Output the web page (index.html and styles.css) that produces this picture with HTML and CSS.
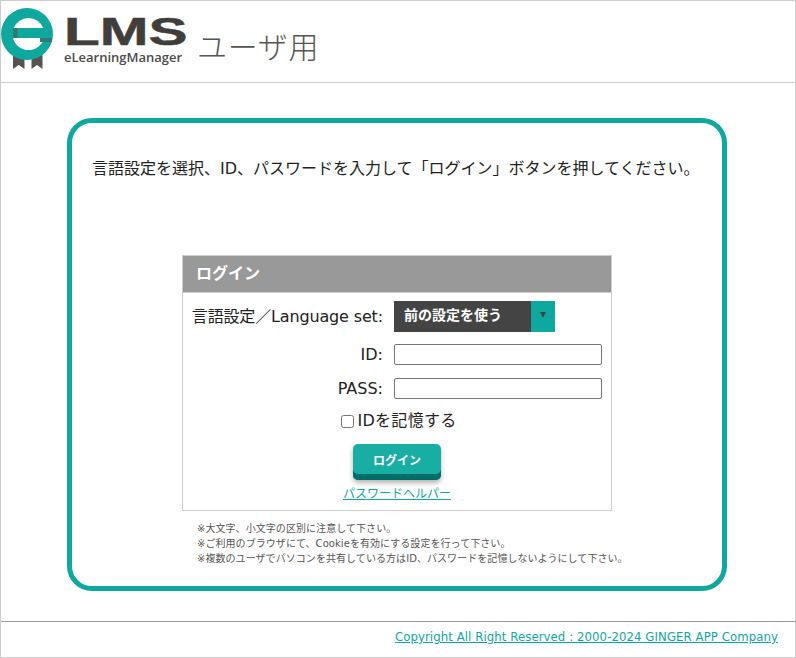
FILE: index.html
```html
<!DOCTYPE html>
<html lang="ja">
<head>
<meta charset="utf-8">
<title>eLMS ユーザ用</title>
<link rel="stylesheet" href="styles.css">
</head>
<body>
<div class="page">
  <header class="header">
    <svg class="logo" width="60" height="72" viewBox="0 0 60 72">
      <path d="M13 54H24.500V69L18.750 65L13 69Z" fill="#58534f"/>
      <path d="M31.500 54H42.500V69L37 65L31.500 69Z" fill="#58534f"/>
      <circle cx="27" cy="34" r="26" fill="#0fa89e"/>
      <path d="M13.700 28A16 16 0 0 1 43.300 28Z" fill="#fff"/>
      <path d="M13 38H44A16 16 0 0 1 13 38Z" fill="#fff"/>
      <rect x="13" y="28" width="4.500" height="10" fill="#2f7a74"/>
      <rect x="40" y="38" width="12" height="4" fill="#2f7a74"/>
    </svg>
    <div class="wordmark">
      <div class="logo-big">LMS</div>
      <div class="logo-small">eLearningManager</div>
    </div>
    <h1 class="title">ユーザ用</h1>
  </header>
  <main class="main">
    <section class="card">
      <p class="lead">言語設定を選択、ID、パスワードを入力して「ログイン」ボタンを押してください。</p>
      <div class="login">
        <h2 class="login-head">ログイン</h2>
        <form class="login-body">
          <div class="row row-lang">
            <span class="label label-lang">言語設定／Language set:</span>
            <div class="select"><span class="select-text">前の設定を使う</span><span class="select-arrow"><i class="tri"></i></span></div>
          </div>
          <div class="row row-id">
            <label class="label" for="uid">ID:</label>
            <input class="field" id="uid" type="text">
          </div>
          <div class="row row-pass">
            <label class="label" for="pw">PASS:</label>
            <input class="field" id="pw" type="password">
          </div>
          <label class="remember"><input class="check" type="checkbox">IDを記憶する</label>
          <button class="btn" type="button">ログイン</button>
          <a class="helper" href="#">パスワードヘルパー</a>
        </form>
      </div>
      <ul class="notes">
        <li>※大文字、小文字の区別に注意して下さい。</li>
        <li>※ご利用のブラウザにて、Cookieを有効にする設定を行って下さい。</li>
        <li>※複数のユーザでパソコンを共有している方はID、パスワードを記憶しないようにして下さい。</li>
      </ul>
    </section>
  </main>
  <footer class="footer"><a href="#">Copyright All Right Reserved : 2000-2024 GINGER APP Company</a></footer>
</div>
</body>
</html>
```
FILE: styles.css
```css
* { box-sizing: border-box; }
html, body { margin: 0; padding: 0; background: #fff; }
body { font-family: "DejaVu Sans", "Noto Sans CJK JP", sans-serif; color: #222; }
.page {
  width: 796px; height: 658px;
  border: 1px solid #ccc;
  display: flex; flex-direction: column;
}
.header {
  height: 82px;
  border-bottom: 1px solid #ccc;
  display: flex; align-items: flex-start;
  flex: none;
}
.logo { display: block; flex: none; margin-top: -1px; margin-left: -1px; }
.wordmark { width: 126px; margin: 17px 0 0 4px; flex: none; }
.logo-big {
  font: bold 39px/28px "Liberation Sans", sans-serif; color: #413d3b;
  -webkit-text-stroke: .5px #413d3b;
  transform: scaleX(1.5); transform-origin: left center;
}
.logo-small { margin-top: 3px; font: 600 13px/16px "Open Sans", sans-serif; color: #4d4a48; white-space: nowrap; }
.title {
  margin: 24px 0 0 7px;
  font-family: "Noto Sans CJK JP", sans-serif;
  font-size: 30px; line-height: 40px; font-weight: 300; color: #555;
  letter-spacing: .7px;
}
.main { flex: 1; padding: 35px 68px 0 66px; }
.card {
  height: 473px;
  border: 5px solid #0fa89e; border-radius: 25px;
  padding: 0 24px 0 20px;
  display: flex; flex-direction: column;
}
.lead { margin: 34px 0 0; font-size: 16px; line-height: 24px; white-space: nowrap; color: #222; }
.login {
  width: 430px; height: 256px;
  margin: 74px 0 0 90px;
  border: 1px solid #ccc;
  flex: none;
}
.login-head {
  margin: 0; height: 37px;
  background: #999; color: #fff;
  border-bottom: 1px solid #ccc;
  font-size: 16px; font-weight: 700; line-height: 35px;
  padding-left: 13px;
}
.login-body { display: flex; flex-direction: column; align-items: center; padding-top: 8px; }
.row { display: flex; align-items: center; align-self: stretch; }
.label { width: 200px; text-align: right; font-size: 16px; line-height: 24px; margin-right: 11px; white-space: nowrap; }
.label-lang { letter-spacing: -.15px; }
.row-lang { height: 31px; }
.row-id { height: 21px; margin-top: 12px; }
.row-pass { height: 21px; margin-top: 13px; }
.select { display: flex; width: 161px; height: 31px; background: #444; color: #fff; }
.select-text { flex: 1; font-size: 14px; font-weight: 700; line-height: 29px; padding-left: 10px; }
.select-arrow { width: 24px; background: #0fa89e; display: flex; justify-content: center; padding-top: 11px; }
.tri { display: block; width: 0; height: 0; border-left: 3px solid transparent; border-right: 3px solid transparent; border-top: 6px solid #444; }
.field { width: 208px; height: 21px; border: 1px solid #767676; border-radius: 2px; background: #fff; padding: 0 2px; margin: 0; }
.remember { display: flex; align-items: center; font-size: 16px; line-height: 24px; margin: 10px 0 0 4px; letter-spacing: .3px; }
.check { width: 13px; height: 13px; margin: 0 3px 0 0; }
.btn {
  width: 88px; height: 36px; margin-top: 11px; padding: 0 0 5px;
  border: none; border-radius: 5px;
  background: #18aea4; color: #fff;
  font: 700 12px/1 "Noto Sans CJK JP", sans-serif;
  box-shadow: inset 0 -6px 0 #006e68, 0 3px 5px rgba(0,0,0,.3);
}
.helper { margin-top: 5px; font-size: 12px; line-height: 18px; color: #0fa89e; text-decoration: underline; }
.notes { list-style: none; margin: 10px 0 0 105px; padding: 0; font-size: 10px; line-height: 15px; color: #555; white-space: nowrap; letter-spacing: .06px; }
.footer {
  flex: none; height: 36px;
  border-top: 1px solid #999;
  text-align: right; padding: 7px 17px 0 0;
  font: 13px/16px "DejaVu Sans Condensed", "DejaVu Sans", sans-serif;
}
.footer a { color: #0fa89e; text-decoration: underline; letter-spacing: .09px; }
```
